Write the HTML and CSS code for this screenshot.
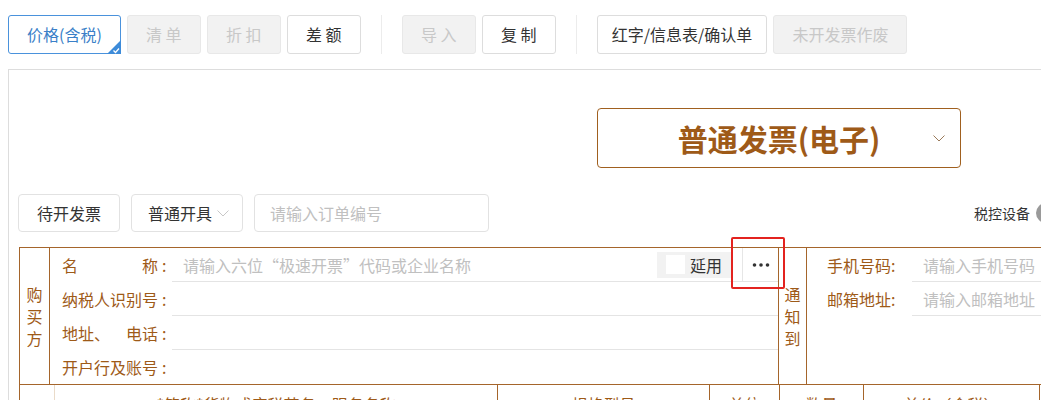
FILE: index.html
```html
<!DOCTYPE html>
<html lang="zh-CN">
<head>
  <meta charset="UTF-8" />
  <meta name="viewport" content="width=device-width, initial-scale=1.0"/>
  <title>开具发票</title>
  <link rel="stylesheet" href="styles.css">
</head>
<body>
  <div class="toolbar">
    <button class="btn active">价格(含税)
      <svg class="corner" width="14" height="14" viewBox="0 0 14 14"><path d="M14 0V14H0Z" fill="#3d8bd9"/><path d="M6.5 10.5l2 2 3.5-4" fill="none" stroke="#fff" stroke-width="1.3"/></svg>
    </button>
    <button class="btn" disabled>清 单</button>
    <button class="btn" disabled>折 扣</button>
    <button class="btn">差 额</button>
    <span class="sep"></span>
    <button class="btn" disabled>导 入</button>
    <button class="btn">复 制</button>
    <span class="sep"></span>
    <button class="btn tight">红字/信息表/确认单</button>
    <button class="btn" disabled>未开发票作废</button>
  </div>

  <div class="panel">
    <div class="type-select">
      <span class="type-name">普通发票(电子)</span>
      <svg width="12" height="7" viewBox="0 0 12 7"><polyline points="0.5,0.5 6,6 11.5,0.5" fill="none" stroke="#9a7a5a" stroke-width="1"/></svg>
    </div>

    <div class="filter-row">
      <button class="fbtn">待开发票</button>
      <button class="fbtn drop">普通开具
        <svg width="12" height="7" viewBox="0 0 12 7"><polyline points="0.5,0.5 6,6 11.5,0.5" fill="none" stroke="#c8c8c8" stroke-width="1"/></svg>
      </button>
      <div class="order-input">请输入订单编号</div>
      <div class="device">税控设备 <span class="toggle"></span></div>
    </div>

    <div class="invoice">
      <div class="buyer">
        <div class="side">购<br>买<br>方</div>
        <div class="fields">
          <div class="field">
            <div class="label"><span class="lt split"><span>名</span><span>称</span></span>:</div>
            <div class="value first">
              <span class="ph">请输入六位“极速开票”代码或企业名称</span>
              <span class="reuse"><span class="check"></span>延用</span>
              <span class="more">
                <svg width="18" height="4" viewBox="0 0 18 4"><circle cx="2.5" cy="2" r="1.8" fill="#333"/><circle cx="9" cy="2" r="1.8" fill="#333"/><circle cx="15.5" cy="2" r="1.8" fill="#333"/></svg>
              </span>
            </div>
          </div>
          <div class="field">
            <div class="label"><span class="lt">纳税人识别号</span>:</div>
            <div class="value"></div>
          </div>
          <div class="field">
            <div class="label"><span class="lt split"><span>地址、</span><span>电话</span></span>:</div>
            <div class="value"></div>
          </div>
          <div class="field">
            <div class="label"><span class="lt">开户行及账号</span>:</div>
            <div class="value last"></div>
          </div>
        </div>
        <div class="side">通<br>知<br>到</div>
        <div class="notify">
          <div class="field">
            <div class="nlabel">手机号码:</div>
            <div class="value"><span class="ph">请输入手机号码</span></div>
          </div>
          <div class="field">
            <div class="nlabel">邮箱地址:</div>
            <div class="value"><span class="ph">请输入邮箱地址</span></div>
          </div>
        </div>
      </div>

      <div class="goods-head">
        <div class="cell idx"></div>
        <div class="cell">*简称*货物或应税劳务、服务名称</div>
        <div class="cell">规格型号</div>
        <div class="cell">单位</div>
        <div class="cell">数量</div>
        <div class="cell">单价（含税）</div>
        <div class="cell">金额（含税）</div>
      </div>

      <div class="highlight"></div>
    </div>
  </div>
</body>
</html>
```

FILE: styles.css
```css
* {
  box-sizing: border-box;
}
body {
  margin: 0;
  background: #fff;
  color: #333;
  font-family: "Noto Sans CJK SC", "Microsoft YaHei", sans-serif;
  font-size: 16px;
  overflow: hidden;
}
button {
  font-family: inherit;
}

/* toolbar */
.toolbar {
  display: flex;
  align-items: center;
  gap: 6px;
  padding: 15px 0 0 8px;
}
.btn {
  position: relative;
  height: 39px;
  min-width: 74px;
  padding: 0 18px;
  border: 1px solid #ddd;
  border-radius: 3px;
  background: #fff;
  color: #333;
  font-size: 16px;
  line-height: 37px;
}
.btn.tight {
  padding: 0 14px;
}
.btn:disabled {
  background: #f2f2f2;
  border-color: #e8e8e8;
  color: #c8c8c8;
}
.btn.active {
  border-color: #4a92dc;
  color: #3a80c8;
}
.corner {
  position: absolute;
  right: -1px;
  bottom: -1px;
}
.sep {
  width: 1px;
  height: 39px;
  margin: 0 14px;
  background: #ececec;
}

/* panel */
.panel {
  width: 1082px;
  margin: 15px 0 0 8px;
  padding: 38px 10px 0;
  border-top: 1px solid #ddd;
  border-left: 1px solid #ddd;
}
.type-select {
  display: flex;
  align-items: center;
  width: 364px;
  height: 60px;
  margin-left: 578px;
  padding: 0 15px 0 27px;
  border: 1px solid #a0601f;
  border-radius: 4px;
}
.type-name {
  flex: 1;
  text-align: center;
  color: #9e5a18;
  font-size: 30px;
  font-weight: bold;
  line-height: 1;
}
.filter-row {
  display: flex;
  align-items: center;
  gap: 11px;
  margin-top: 26px;
  margin-left: -1px;
}
.fbtn {
  display: flex;
  align-items: center;
  gap: 5px;
  height: 38px;
  padding: 0 18px;
  border: 1px solid #e2e2e2;
  border-radius: 4px;
  background: #fff;
  color: #333;
  font-size: 16px;
}
.fbtn.drop {
  padding: 0 13px 0 16px;
}
.order-input {
  width: 235px;
  height: 38px;
  padding-left: 15px;
  border: 1px solid #e2e2e2;
  border-radius: 4px;
  color: #c0c0c0;
  line-height: 36px;
}
.device {
  display: flex;
  align-items: center;
  gap: 6px;
  margin-left: auto;
  font-size: 14px;
  color: #333;
}
.toggle {
  width: 44px;
  height: 20px;
  border-radius: 10px;
  background: #9a9a9a;
}

/* invoice */
.invoice {
  position: relative;
  margin-top: 15px;
  border-top: 1px solid #a5652b;
  border-left: 1px solid #a5652b;
  color: #9e5a18;
}
.buyer {
  display: grid;
  grid-template-columns: 30px 729px 28px 1fr;
}
.side {
  display: flex;
  align-items: center;
  justify-content: center;
  height: 137px;
  border-right: 1px solid #a5652b;
  border-bottom: 1px solid #a5652b;
  text-align: center;
  line-height: 22px;
}
.fields {
  padding-left: 12px;
  border-right: 1px solid #a5652b;
  border-bottom: 1px solid #a5652b;
}
.notify {
  padding-left: 20px;
  border-bottom: 1px solid #a5652b;
}
.field {
  display: flex;
  align-items: center;
  height: 34px;
}
.label {
  display: flex;
  width: 110px;
  gap: 4px;
}
.lt {
  width: 96px;
}
.lt.split {
  display: flex;
  justify-content: space-between;
}
.value {
  flex: 1;
  display: flex;
  align-items: center;
  height: 34px;
  border-bottom: 1px solid #e4e4e4;
}
.value.last {
  border-bottom: none;
}
.ph {
  flex: 1;
  padding-left: 11px;
  color: #c0c0c0;
}
.reuse {
  display: flex;
  align-items: center;
  gap: 5px;
  height: 26px;
  padding: 0 10px 0 9px;
  background: #f2f2f2;
  color: #333;
}
.check {
  width: 19px;
  height: 19px;
  background: #fff;
}
.more {
  display: flex;
  align-items: center;
  justify-content: center;
  width: 36px;
  height: 33px;
  margin-left: 10px;
  border-left: 1px solid #e6e6e6;
}
.nlabel {
  width: 85px;
}
.goods-head {
  display: grid;
  grid-template-columns: 35px 443px 212px 70px 84px 176px 1fr;
}
.cell {
  height: 34px;
  border-right: 1px solid #a5652b;
  text-align: center;
  line-height: 34px;
  padding-top: 2px;
}
.cell.idx {
  border-right-color: #eadbc9;
}
.highlight {
  position: absolute;
  left: 711px;
  top: -11px;
  width: 54px;
  height: 52px;
  border: 2px solid #e3231f;
  border-radius: 2px;
}
```
